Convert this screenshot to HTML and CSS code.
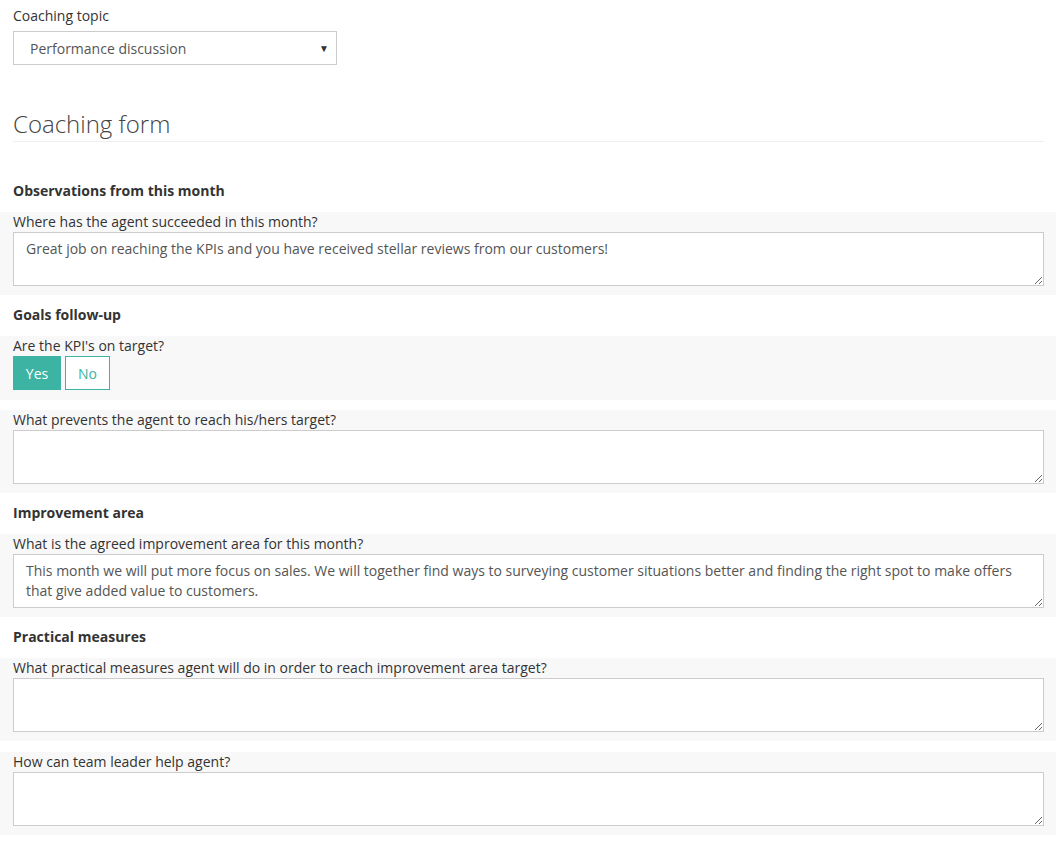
FILE: index.html
```html
<!DOCTYPE html>
<html>
<head>
<meta charset="utf-8">
<link rel="stylesheet" href="styles.css">
</head>
<body>
<div class="page">
  <div class="topic">
    <label class="topic-label">Coaching topic</label>
    <div class="select">
      <span>Performance discussion</span>
      <span class="arrow">&#9660;</span>
    </div>
  </div>

  <h2 class="form-title">Coaching form</h2>

  <h3 class="section">Observations from this month</h3>
  <div class="panel">
    <div class="q">Where has the agent succeeded in this month?</div>
    <textarea class="ta">Great job on reaching the KPIs and you have received stellar reviews from our customers!</textarea>
  </div>

  <h3 class="section">Goals follow-up</h3>
  <div class="panel panel-buttons">
    <div class="q">Are the KPI's on target?</div>
    <div class="btns">
      <span class="btn btn-yes">Yes</span>
      <span class="btn btn-no">No</span>
    </div>
  </div>
  <div class="panel panel-next">
    <div class="q">What prevents the agent to reach his/hers target?</div>
    <textarea class="ta"></textarea>
  </div>

  <h3 class="section">Improvement area</h3>
  <div class="panel">
    <div class="q">What is the agreed improvement area for this month?</div>
    <textarea class="ta">This month we will put more focus on sales. We will together find ways to surveying customer situations better and finding the right spot to make offers that give added value to customers.</textarea>
  </div>

  <h3 class="section">Practical measures</h3>
  <div class="panel">
    <div class="q">What practical measures agent will do in order to reach improvement area target?</div>
    <textarea class="ta"></textarea>
  </div>
  <div class="panel panel-next2">
    <div class="q">How can team leader help agent?</div>
    <textarea class="ta"></textarea>
  </div>
</div>
</body>
</html>
```

FILE: styles.css
```css
html, body {
  margin: 0;
  padding: 0;
  background: #ffffff;
}
body {
  font-family: "Open Sans", "Liberation Sans", sans-serif;
  font-size: 14px;
  color: #333333;
}
.page {
  width: 1056px;
}
.topic {
  padding: 6px 0 0 13px;
}
.topic-label {
  display: block;
  line-height: 20px;
  margin-bottom: 5px;
  color: #333;
}
.select {
  box-sizing: border-box;
  width: 324px;
  height: 34px;
  border: 1px solid #cccccc;
  background: #fff;
  display: flex;
  align-items: center;
  justify-content: space-between;
  padding: 0 7px 0 16px;
  color: #555;
}
.arrow {
  font-size: 10px;
  color: #333;
}
.form-title {
  margin: 41px 12px 0 13px;
  font-size: 24px;
  font-weight: 300;
  line-height: 35px;
  color: #444;
  border-bottom: 1px solid #eeeeee;
}
.section {
  margin: 10px 0 11px 13px;
  font-size: 14px;
  font-weight: 700;
  line-height: 20px;
  color: #333;
}
.form-title + .section {
  margin-top: 39px;
}
.panel {
  background: #f8f8f8;
  padding: 0 12px 9px 13px;
  display: flex;
  flex-direction: column;
}
.panel-next {
  margin-top: 10px;
}
.panel-next2 {
  margin-top: 11px;
}
.q {
  line-height: 20px;
  color: #333;
}
.ta {
  box-sizing: border-box;
  width: 1031px;
  height: 54px;
  border: 1px solid #cccccc;
  border-radius: 0;
  background: #fff;
  font-family: "Open Sans", "Liberation Sans", sans-serif;
  font-size: 14px;
  line-height: 20px;
  color: #555;
  padding: 6px 12px;
  margin: 0;
  resize: vertical;
  overflow: hidden;
}
.panel-buttons {
  padding-bottom: 10px;
}
.btns {
  display: flex;
  gap: 4px;
  margin-top: 0;
}
.btn {
  box-sizing: border-box;
  height: 34px;
  display: flex;
  align-items: center;
  justify-content: center;
  font-size: 14px;
}
.btn-yes {
  width: 48px;
  background: #3cb3a3;
  color: #ffffff;
  border: 1px solid #3cb3a3;
}
.btn-no {
  width: 45px;
  background: #ffffff;
  color: #3cb3a3;
  border: 1px solid #3cb3a3;
}
```
